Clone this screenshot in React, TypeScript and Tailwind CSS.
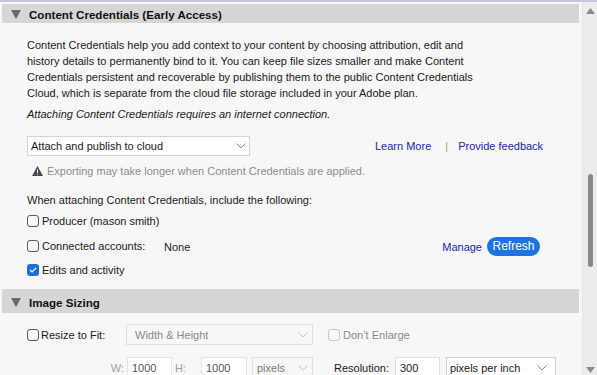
import React from "react";

const font = { fontFamily: '"Liberation Sans", Arial, sans-serif' };

function Chevron({ color = "#8a8a8a" }: { color?: string }) {
  return (
    <svg width="10" height="6" viewBox="0 0 10 6" fill="none">
      <path d="M0.5 0.5 L5 5 L9.5 0.5" stroke={color} strokeWidth="1" />
    </svg>
  );
}

function Tri() {
  return (
    <svg width="10" height="9" viewBox="0 0 10 9">
      <path d="M0 0 H10 L5 9 Z" fill="#6b6b6b" />
    </svg>
  );
}

function Box({ checked = false, disabled = false }: { checked?: boolean; disabled?: boolean }) {
  if (checked)
    return (
      <div className="w-[12px] h-[12px] rounded-[3px] bg-[#1f6fd6] flex items-center justify-center shrink-0">
        <svg width="8" height="6" viewBox="0 0 8 6" fill="none">
          <path d="M1 3 L3 5 L7 1" stroke="white" strokeWidth="1.2" />
        </svg>
      </div>
    );
  return (
    <div
      className={
        "w-[12px] h-[12px] rounded-[3px] border shrink-0 " +
        (disabled ? "border-[#c8c8c8]" : "border-[#5a5a5a]")
      }
    />
  );
}

function Header({ title }: { title: string }) {
  return (
    <div className="ml-[2px] h-[24px] bg-[#d6d6d6] flex items-center pl-[9px] pt-[2px]">
      <Tri />
      <span className="ml-[8px] text-[11.6px] font-bold text-[#111]">{title}</span>
    </div>
  );
}

export default function App() {
  return (
    <div style={font} className="w-[597px] h-[375px] overflow-hidden bg-[#f7f7f7] text-[11px] text-[#1a1a1a] flex flex-col">
      <div className="h-[2px] bg-[#cbc3dc] shrink-0" />
      <div className="flex flex-1 min-h-0">
        <div className="w-[579px] flex flex-col pt-[2px]">
          <Header title="Content Credentials (Early Access)" />
          <div className="pl-[27px] pr-[20px] pt-[14px] leading-[16px]">
            <p>
              Content Credentials help you add context to your content by choosing attribution, edit and
              <br />
              history details to permanently bind to it. You can keep file sizes smaller and make Content
              <br />
              Credentials persistent and recoverable by publishing them to the public Content Credentials
              <br />
              Cloud, which is separate from the cloud file storage included in your Adobe plan.
            </p>
            <p className="italic mt-[5px]">Attaching Content Credentials requires an internet connection.</p>
            <div className="flex items-center mt-[14px] h-[20px]">
              <div className="w-[223px] h-[20px] bg-white border border-[#d4d4d4] flex items-center justify-between pl-[3px] pr-[3px]">
                <span>Attach and publish to cloud</span>
                <Chevron />
              </div>
              <div className="ml-[125px] flex items-center text-[#1e1eaa]">
                <span>Learn More</span>
                <span className="ml-[14px] text-[#c49a5c]">|</span>
                <span className="ml-[10px]">Provide feedback</span>
              </div>
            </div>
            <div className="flex items-center mt-[7px] h-[16px] pl-[5px] text-[#8c8c8c]">
              <svg width="11" height="10" viewBox="0 0 11 10">
                <path d="M5.5 0 L11 10 H0 Z" fill="#4a4a4a" />
                <rect x="5" y="3.5" width="1" height="3.5" fill="#f7f7f7" />
                <rect x="5" y="7.8" width="1" height="1" fill="#f7f7f7" />
              </svg>
              <span className="ml-[4px]">Exporting may take longer when Content Credentials are applied.</span>
            </div>
            <div className="mt-[13px] h-[16px]">When attaching Content Credentials, include the following:</div>
            <div className="mt-[5px] h-[16px] flex items-center">
              <Box />
              <span className="ml-[3px]">Producer (mason smith)</span>
            </div>
            <div className="mt-[7px] h-[20px] flex items-center pr-[19px]">
              <Box />
              <span className="ml-[3px] w-[122px]">Connected accounts:</span>
              <span className="mt-[1px]">None</span>
              <span className="ml-auto text-[#1e1eaa] mt-[1px]">Manage</span>
              <div className="ml-[5px] w-[53px] h-[19px] rounded-full bg-[#1f73df] text-white text-[12px] flex items-center justify-center">
                Refresh
              </div>
            </div>
            <div className="mt-[6px] h-[16px] flex items-center">
              <Box checked />
              <span className="ml-[3px]">Edits and activity</span>
            </div>
          </div>
          <div className="mt-[11px]">
            <Header title="Image Sizing" />
          </div>
          <div className="pl-[27px] pt-[11px]">
            <div className="flex items-center h-[21px]">
              <Box />
              <span className="ml-[2px] w-[85px]">Resize to Fit:</span>
              <div className="w-[187px] h-[21px] border border-[#e0e0e0] flex items-center justify-between pl-[8px] pr-[4px] text-[#8a8a8a]">
                <span>Width &amp; Height</span>
                <Chevron color="#c4c4c4" />
              </div>
              <div className="ml-[15px] flex items-center text-[#8a8a8a]">
                <Box disabled />
                <span className="ml-[3px]">Don’t Enlarge</span>
              </div>
            </div>
            <div className="flex items-center h-[21px] mt-[12px]">
              <span className="w-[97px] text-right text-[#a0a0a0]">W:</span>
              <div className="ml-[3px] w-[45px] h-[21px] bg-white border border-[#e4e4e4] flex items-center pl-[4px] text-[#555]">1000</div>
              <span className="ml-[3px] w-[26px] text-[#a0a0a0]">H:</span>
              <div className="w-[46px] h-[21px] bg-white border border-[#e4e4e4] flex items-center pl-[4px] text-[#555]">1000</div>
              <div className="ml-[5px] w-[61px] h-[21px] border border-[#e0e0e0] flex items-center justify-between pl-[4px] pr-[4px] text-[#7a7a7a]">
                <span>pixels</span>
                <Chevron color="#c4c4c4" />
              </div>
              <span className="ml-[21px] w-[61px]">Resolution:</span>
              <div className="w-[45px] h-[21px] bg-white border border-[#e0e0e0] flex items-center pl-[4px]">300</div>
              <div className="ml-[6px] w-[110px] h-[21px] bg-white border border-[#cfcfcf] flex items-center justify-between pl-[3px] pr-[8px]">
                <span>pixels per inch</span>
                <Chevron />
              </div>
            </div>
          </div>
        </div>
        <div className="w-[3px]" />
        <div className="w-[1px] bg-[#e4e4e4]" />
        <div className="flex-1 bg-[#ececec] flex flex-col items-center relative">
          <svg className="mt-[6px]" width="9" height="6" viewBox="0 0 9 6">
            <path d="M4.5 0 L9 6 H0 Z" fill="#8a8a8a" />
          </svg>
          <div className="mt-[160px] w-[5px] h-[93px] rounded-full bg-[#888]" />
          <svg className="absolute bottom-[2px]" width="9" height="6" viewBox="0 0 9 6">
            <path d="M0 0 H9 L4.5 6 Z" fill="#8a8a8a" />
          </svg>
        </div>
      </div>
    </div>
  );
}
